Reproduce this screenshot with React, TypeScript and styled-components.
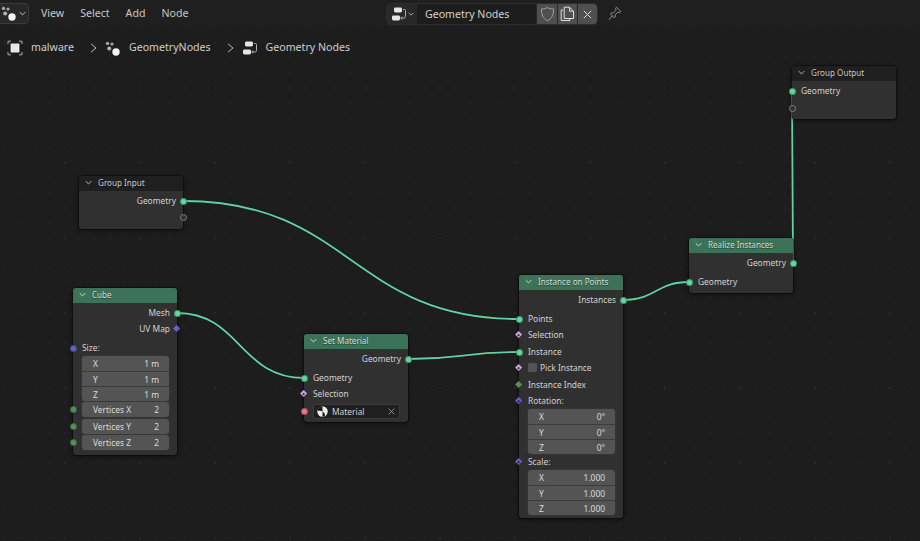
import React from "react";
import styled, { createGlobalStyle } from "styled-components";

const BAR_H = 26;
const WIRE = "#62d2a2";

const Global = createGlobalStyle`
  html, body { margin: 0; padding: 0; background: #1d1d1d; }
  body { font-family: "Noto Sans", "DejaVu Sans", sans-serif; }
`;

const Frame = styled.div`
  width: 920px; height: 541px; overflow: hidden;
  display: flex; flex-direction: column; background: #1d1d1d; color: #d4d4d4;
`;
const TopBar = styled.header`
  height: ${BAR_H}px; flex: none; display: flex; align-items: center;
  background: #1f1f1f; font-size: 10.6px; position: relative; z-index: 3;
`;
const EditorSelect = styled.div`
  width: 30px; height: 21px; margin-left: -1px; box-sizing: border-box;
  border: 1px solid #3a3a3a; border-radius: 0 4px 4px 0; background: #282828;
  display: flex; align-items: center; justify-content: flex-end; gap: 2px; padding-right: 2px;
`;
const Menu = styled.nav`
  display: flex; gap: 16px; margin-left: 12px; color: #c8c8c8;
`;
const MenuItem = styled.span``;
const DataBlock = styled.div`
  display: flex; align-items: center; height: 20px; position: absolute; left: 387px; top: 4px;
  border-radius: 4px; overflow: hidden; background: #282828; box-shadow: 0 0 0 .5px #3a3a3a;
`;
const BlockSelect = styled.div`
  width: 30px; height: 100%; display: flex; align-items: center; justify-content: center; gap: 1px;
`;
const NameField = styled.div`
  width: 119px; height: 100%; box-sizing: border-box; padding: 0 0 1px 8px;
  background: #1d1d1d; display: flex; align-items: center; color: #d0d0d0; font-size: 10.6px;
`;
const BlockBtn = styled.div<{ $w: number }>`
  width: ${(p) => p.$w}px; height: 100%; background: #4f4f4f; margin-left: 1px;
  display: flex; align-items: center; justify-content: center;
`;
const PinBox = styled.div`
  position: absolute; left: 608px; top: 6px; display: flex; align-items: center;
`;

const Canvas = styled.main`
  flex: 1; position: relative; overflow: hidden;
`;
const Grid = styled.svg`
  position: absolute; left: 0; top: 0;
`;
const Wires = styled.svg`
  position: absolute; left: 0; top: 0; z-index: 1;
`;
const Crumbs = styled.div`
  position: relative; z-index: 2; display: flex; align-items: center; height: 14px;
  margin-top: 15px; padding-left: 7px; font-size: 10.6px; color: #cfcfcf;
`;
const Crumb = styled.span<{ $ml: number }>`
  margin-left: ${(p) => p.$ml}px; position: relative; top: -1px;
`;
const CrumbIcon = styled.span<{ $ml: number }>`
  margin-left: ${(p) => p.$ml}px; display: flex;
`;

const NodeBox = styled.section<{ $x: number; $y: number }>`
  position: absolute; left: ${(p) => p.$x}px; top: ${(p) => p.$y - BAR_H}px; width: 104px;
  border-radius: 3px; background: #303030; z-index: 2; font-size: 8.4px; color: #d2d2d2;
  box-shadow: 0 1px 4px rgba(0,0,0,.65), 0 0 0 .5px rgba(0,0,0,.6);
`;
const NodeHead = styled.div<{ $green?: boolean }>`
  height: 15px; box-sizing: border-box; border-radius: 3px 3px 0 0; display: flex; align-items: center;
  gap: 6px; padding: 0 0 3px 6px; background: ${(p) => (p.$green ? "#3c7358" : "#1f1f1f")};
  color: ${(p) => (p.$green ? "#d4dfd9" : "#cbcbcb")}; white-space: nowrap;
  text-shadow: 0 1px 1px rgba(0,0,0,.45); font-size: 8.1px;
`;
const NodeBody = styled.div<{ $pb: number }>`
  padding: 2px 0 ${(p) => p.$pb}px;
`;
const Row = styled.div<{ $h?: number; $mt?: number; $right?: boolean }>`
  height: ${(p) => p.$h ?? 16}px; margin-top: ${(p) => p.$mt ?? 0}px; position: relative;
  display: flex; align-items: center; box-sizing: border-box; white-space: nowrap;
  justify-content: ${(p) => (p.$right ? "flex-end" : "flex-start")};
  padding: ${(p) => (p.$right ? "0 7px 1.5px 0" : "0 8px 1.5px 9px")};
`;
const Socket = styled.i<{ $side: "l" | "r"; $color: string; $ring?: string }>`
  position: absolute; top: 50%; ${(p) => (p.$side === "l" ? "left: -3.5px" : "right: -3.5px")};
  width: 7px; height: 7px; margin-top: -3.5px; border-radius: 50%; box-sizing: border-box;
  background: ${(p) => p.$color}; z-index: 3;
  border: 1px solid ${(p) => p.$ring ?? "rgba(0,0,0,.3)"};
`;
const Diamond = styled.i<{ $side: "l" | "r"; $color: string; $center?: string }>`
  position: absolute; top: 50%; ${(p) => (p.$side === "l" ? "left: -2.6px" : "right: -2.6px")};
  width: 5.2px; height: 5.2px; margin-top: -2.6px; transform: rotate(45deg);
  background: ${(p) => p.$color}; z-index: 3; display: flex; align-items: center; justify-content: center;
  &::after {
    content: ""; width: 2.2px; height: 2.2px;
    background: ${(p) => p.$center ?? p.$color};
  }
`;
const FieldGroup = styled.div<{ $mt?: number }>`
  margin: ${(p) => p.$mt ?? 0}px 8px 0 9px; border-radius: 3px; overflow: hidden;
  box-shadow: 0 0 0 .5px #3a3a3a;
`;
const Field = styled.div<{ $h?: number }>`
  height: ${(p) => p.$h ?? 15}px; box-sizing: border-box; background: #545454; color: #dcdcdc;
  display: flex; justify-content: space-between; align-items: center; padding: 0 10px 0 11px;
  & + & { border-top: 1px solid #3b3b3b; }
`;
const SoloField = styled(Field)`
  width: 87px; margin-left: 0; border-radius: 3px; position: relative; box-shadow: 0 0 0 .5px #3a3a3a;
`;
const SoloWrap = styled(Row)`
  padding: 0 8px 0 9px;
`;
const MaterialField = styled.div`
  width: 87px; height: 15px; box-sizing: border-box; border-radius: 3px; background: #1f1f1f;
  border: 1px solid #3a3a3a; display: flex; align-items: center; gap: 4px; padding: 0 4px 0 3px; color: #d0d0d0;
`;
const MaterialName = styled.span`
  flex: 1;
`;
const Check = styled.span`
  width: 9px; height: 9px; border-radius: 1.5px; background: #545454; margin-right: 3px; flex: none;
`;

const Chevron = ({ color = "#c8c8c8", size = 7 }: { color?: string; size?: number }) => (
  <svg width={size} height={size} viewBox="0 0 8 8" fill="none" stroke={color} strokeWidth="1.1" style={{ flex: "none" }}>
    <path d="M.8 2.4 L4 5.6 L7.2 2.4" />
  </svg>
);
const NodesIcon = ({ size = 16 }: { size?: number }) => (
  <svg width={size} height={size} viewBox="0 0 16 16" style={{ flex: "none" }}>
    <circle cx="2.5" cy="3.4" r="1.7" fill="#a8a8a8" />
    <circle cx="7" cy="4" r="1.6" fill="#a8a8a8" />
    <circle cx="4.2" cy="8.6" r="2" fill="#b4b4b4" />
    <circle cx="11" cy="12" r="3.7" fill="#f2f2f2" />
  </svg>
);
const TreeIcon = () => (
  <svg width="16" height="16" viewBox="0 0 16 16" fill="none" style={{ flex: "none" }}>
    <rect x="3" y="1.5" width="8" height="5" rx="1.4" fill="#e6e6e6" />
    <rect x="1" y="9.5" width="8" height="5" rx="1.4" fill="#e6e6e6" />
    <path d="M12 3.5h1.5a1 1 0 0 1 1 1v6a1.5 1.5 0 0 1-1.5 1.5h-3M11 10.5l-1.3 1.5L11 13.5" stroke="#bdbdbd" strokeWidth=".9" />
  </svg>
);
const ObjectIcon = () => (
  <svg width="16" height="16" viewBox="0 0 16 16" fill="none" style={{ flex: "none" }}>
    <rect x="3.6" y="3.6" width="8.8" height="8.8" rx=".6" fill="#e8e8e8" />
    <path d="M1 4V1.2h3M12 1.2h3V4M15 12v2.8h-3M4 14.8H1V12" stroke="#bdbdbd" strokeWidth=".9" />
  </svg>
);
const Arrow = () => (
  <svg width="7" height="10" viewBox="0 0 7 10" fill="none" stroke="#bdbdbd" strokeWidth="1" style={{ flex: "none" }}>
    <path d="M1 .8 L6 5 L1 9.2" />
  </svg>
);
const Shield = () => (
  <svg width="15" height="16" viewBox="0 0 15 16" fill="none" stroke="#a0a0a0" strokeWidth="1">
    <path d="M7.5 1.5 C9.5 2.8 11.5 3 13.5 3 C13.7 8.5 12 12.5 7.5 14.8 C3 12.5 1.3 8.5 1.5 3 C3.5 3 5.5 2.8 7.5 1.5Z" />
  </svg>
);
const Copy = () => (
  <svg width="15" height="16" viewBox="0 0 15 16" fill="none" stroke="#e0e0e0" strokeWidth="1">
    <path d="M3 4H1.2v10.5h8.6V12.5" />
    <path d="M4.2 1.2h5.3l4 4v7.3H4.2Z" />
    <path d="M9.5 1.2v4h4" />
  </svg>
);
const Cross = ({ size = 9, color = "#dcdcdc" }: { size?: number; color?: string }) => (
  <svg width={size} height={size} viewBox="0 0 9 9" fill="none" stroke={color} strokeWidth="1">
    <path d="M.8.8l7.4 7.4M8.2.8L.8 8.2" />
  </svg>
);
const Pin = () => (
  <svg width="14" height="15" viewBox="0 0 14 15" fill="none" stroke="#8f8f8f" strokeWidth="1">
    <path d="M8.3 1.2 L13 5.6 L11.6 6.6 L9.8 6.2 L7.2 8.8 L7.2 11 L6.2 11.8 L2.4 7.8 L3.4 6.9 L5.5 6.9 L8 4.2 L7.6 2.4 Z" />
    <path d="M4 10 L1 13.8" />
  </svg>
);
const MaterialBall = () => (
  <svg width="11" height="11" viewBox="0 0 11 11" style={{ flex: "none" }}>
    <circle cx="5.5" cy="5.5" r="5.2" fill="#efefef" />
    <path d="M5.5 .3A5.2 5.2 0 0 0 .4 4.6C2 5 4 5 5.5 5.5Z" fill="#1b1b1b" />
    <path d="M5.5 5.5C7 6 8.2 8 8 10A5.2 5.2 0 0 1 5.5 10.7Z" fill="#1b1b1b" />
  </svg>
);

const SOCKET = {
  geo: "#60d6a0",
  vec: "#6363c7",
  int: "#598c5c",
  mat: "#eb7582",
  sel: "#cea2e8",
};

const GeoOut = ({ label, mt }: { label: string; mt?: number }) => (
  <Row $right $mt={mt}>
    {label}
    <Socket $side="r" $color={SOCKET.geo} />
  </Row>
);
const GeoIn = ({ label, mt }: { label: string; mt?: number }) => (
  <Row $mt={mt}>
    {label}
    <Socket $side="l" $color={SOCKET.geo} />
  </Row>
);
const SelectionIn = ({ children, mt }: { children: React.ReactNode; mt?: number }) => (
  <Row $mt={mt}>
    {children}
    <Diamond $side="l" $color={SOCKET.sel} $center="#3a3050" />
  </Row>
);
const Triple = ({ values, mt }: { values: string[]; mt?: number }) => (
  <FieldGroup $mt={mt}>
    {["X", "Y", "Z"].map((k, i) => (
      <Field key={k}>
        <span>{k}</span>
        <span>{values[i]}</span>
      </Field>
    ))}
  </FieldGroup>
);
const IntField = ({ label, mt }: { label: string; mt: number }) => (
  <SoloWrap $h={15} $mt={mt}>
    <Socket $side="l" $color={SOCKET.int} />
    <SoloField>
      <span>{label}</span>
      <span>2</span>
    </SoloField>
  </SoloWrap>
);

const Node = ({ x, y, title, green, pb, children }: {
  x: number; y: number; title: string; green?: boolean; pb: number; children: React.ReactNode;
}) => (
  <NodeBox $x={x} $y={y}>
    <NodeHead $green={green}>
      <Chevron color={green ? "#d4dfd9" : "#bdbdbd"} />
      {title}
    </NodeHead>
    <NodeBody $pb={pb}>{children}</NodeBody>
  </NodeBox>
);

const wires = [
  "M183 201 C 351 201, 351 319, 519 319",
  "M177 313 C 240 313, 240 378, 304 378",
  "M408 359 C 463 359, 463 352, 519 352",
  "M623 300 C 656 300, 656 282, 689 282",
  "M793 263 L 792 91",
];

export default function App() {
  const minor: React.ReactNode[] = [];
  for (let x = 4; x < 920; x += 15) {
    for (let y = 12; y < 541; y += 15) {
      const major = (x - 64) % 75 === 0 && (y - 12) % 75 === 0;
      minor.push(
        <rect key={`${x}-${y}`} x={x} y={y - BAR_H} width="2" height="2" fill={major ? "#282828" : "#222222"} />
      );
    }
  }
  return (
    <Frame>
      <Global />
      <TopBar>
        <EditorSelect>
          <NodesIcon />
          <Chevron size={7} />
        </EditorSelect>
        <Menu>
          <MenuItem>View</MenuItem>
          <MenuItem>Select</MenuItem>
          <MenuItem>Add</MenuItem>
          <MenuItem>Node</MenuItem>
        </Menu>
        <DataBlock>
          <BlockSelect>
            <TreeIcon />
            <Chevron size={6} />
          </BlockSelect>
          <NameField>Geometry Nodes</NameField>
          <BlockBtn $w={20}><Shield /></BlockBtn>
          <BlockBtn $w={19}><Copy /></BlockBtn>
          <BlockBtn $w={19}><Cross /></BlockBtn>
        </DataBlock>
        <PinBox><Pin /></PinBox>
      </TopBar>
      <Canvas>
        <Grid width="920" height="515">{minor}</Grid>
        <Crumbs>
          <ObjectIcon />
          <Crumb $ml={8}>malware</Crumb>
          <CrumbIcon $ml={16}><Arrow /></CrumbIcon>
          <CrumbIcon $ml={8}><NodesIcon /></CrumbIcon>
          <Crumb $ml={8}>GeometryNodes</Crumb>
          <CrumbIcon $ml={16}><Arrow /></CrumbIcon>
          <CrumbIcon $ml={8}><TreeIcon /></CrumbIcon>
          <Crumb $ml={8}>Geometry Nodes</Crumb>
        </Crumbs>
        <Wires width="920" height="515" viewBox={`0 ${BAR_H} 920 515`} fill="none">
          {wires.map((d) => (
            <path key={d + "o"} d={d} stroke="#141414" strokeWidth="3" opacity=".55" />
          ))}
          {wires.map((d) => (
            <path key={d} d={d} stroke={WIRE} strokeWidth="1.8" />
          ))}
        </Wires>

        <Node x={792} y={66} title="Group Output" pb={3}>
          <GeoIn label="Geometry" />
          <Row $mt={1}><Socket $side="l" $color="#303030" $ring="#808080" /></Row>
        </Node>

        <Node x={79} y={176} title="Group Input" pb={4}>
          <GeoOut label="Geometry" />
          <Row $right><Socket $side="r" $color="#303030" $ring="#808080" /></Row>
        </Node>

        <Node x={689} y={238} title="Realize Instances" green pb={3}>
          <GeoOut label="Geometry" />
          <GeoIn label="Geometry" mt={3} />
        </Node>

        <Node x={73} y={288} title="Cube" green pb={5}>
          <GeoOut label="Mesh" />
          <Row $right>
            UV Map
            <Diamond $side="r" $color={SOCKET.vec} />
          </Row>
          <Row $h={14} $mt={4}>
            Size:
            <Socket $side="l" $color={SOCKET.vec} />
          </Row>
          <Triple values={["1 m", "1 m", "1 m"]} mt={1} />
          <IntField label="Vertices X" mt={1} />
          <IntField label="Vertices Y" mt={2} />
          <IntField label="Vertices Z" mt={1} />
        </Node>

        <Node x={304} y={334} title="Set Material" green pb={3}>
          <GeoOut label="Geometry" />
          <GeoIn label="Geometry" mt={3} />
          <SelectionIn>Selection</SelectionIn>
          <SoloWrap $h={15} $mt={2}>
            <Socket $side="l" $color={SOCKET.mat} />
            <MaterialField>
              <MaterialBall />
              <MaterialName>Material</MaterialName>
              <Cross size={7} color="#a8a8a8" />
            </MaterialField>
          </SoloWrap>
        </Node>

        <Node x={519} y={275} title="Instance on Points" green pb={3}>
          <GeoOut label="Instances" />
          <GeoIn label="Points" mt={3} />
          <SelectionIn>Selection</SelectionIn>
          <GeoIn label="Instance" mt={1} />
          <SelectionIn><Check />Pick Instance</SelectionIn>
          <Row $mt={1}>
            Instance Index
            <Diamond $side="l" $color={SOCKET.int} />
          </Row>
          <Row>
            Rotation:
            <Diamond $side="l" $color={SOCKET.vec} $center="#241f4d" />
          </Row>
          <Triple values={["0°", "0°", "0°"]} />
          <Row>
            Scale:
            <Diamond $side="l" $color={SOCKET.vec} $center="#241f4d" />
          </Row>
          <Triple values={["1.000", "1.000", "1.000"]} />
        </Node>
      </Canvas>
    </Frame>
  );
}
